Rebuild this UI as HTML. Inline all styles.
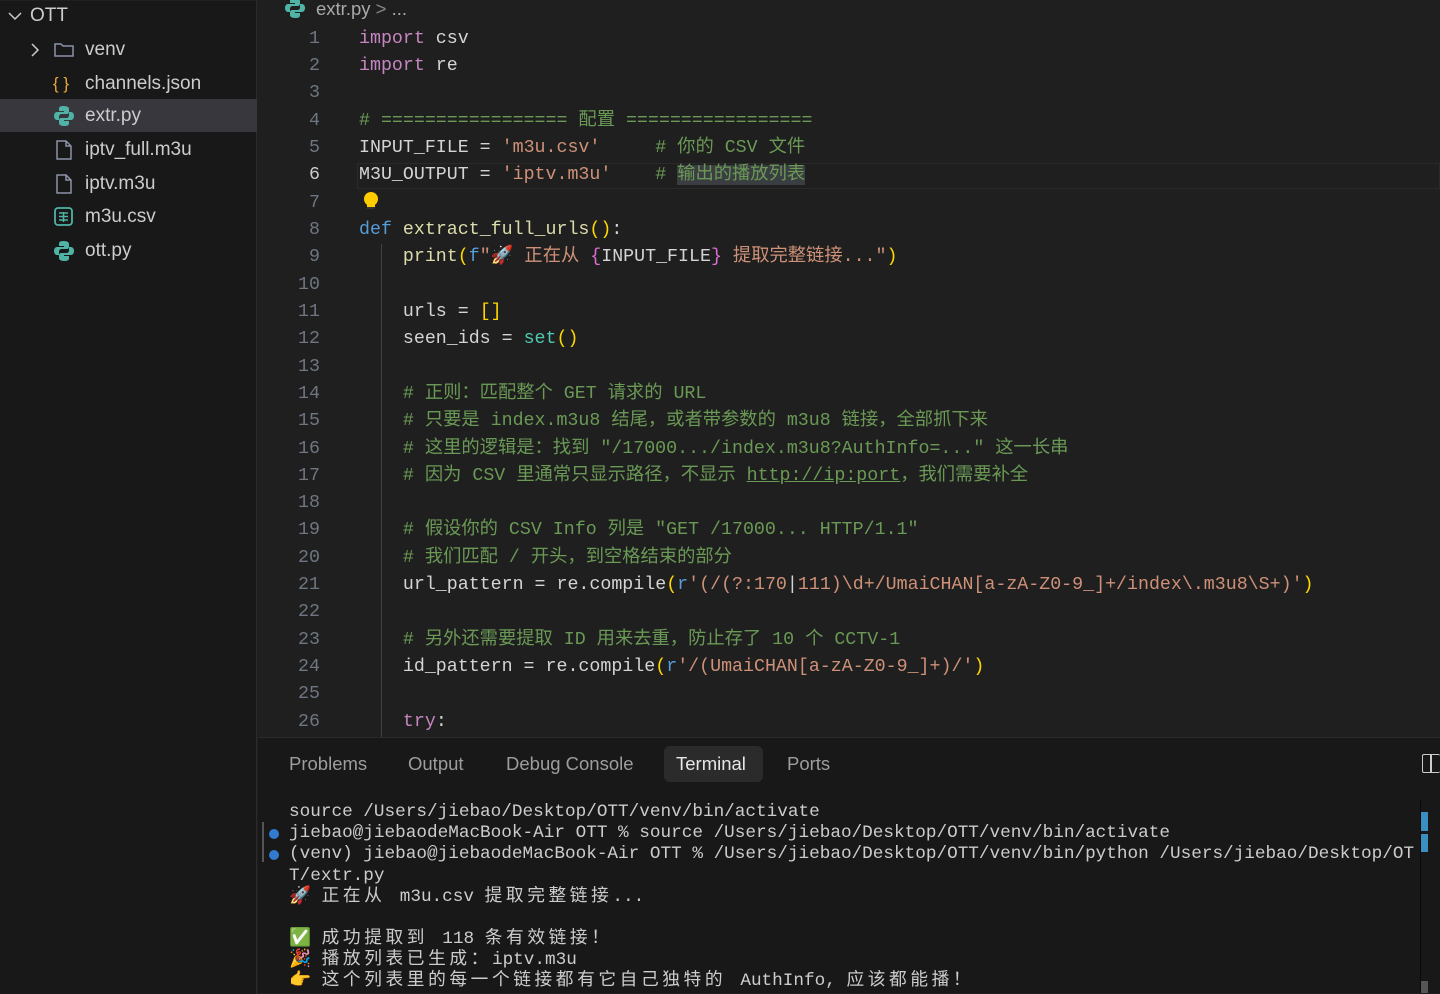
<!DOCTYPE html>
<html><head><meta charset="utf-8">
<style>
*{margin:0;padding:0;box-sizing:border-box}
body{width:1440px;height:993px;background:#1f1f1f;overflow:hidden;position:relative;font-family:"Liberation Sans","Noto Sans CJK SC",sans-serif;color:#cccccc}
#side{position:absolute;left:0;top:1px;width:257px;height:993px;background:#181818;border-right:1px solid #2b2b2b}
.it{position:absolute;left:0;width:257px;height:33px;font-size:19px;line-height:33px;color:#cccccc}
.it .ic{position:absolute;left:53px;top:0;width:22px;height:33px}
.it .t{position:absolute;left:85px}
#ed{position:absolute;left:258px;top:0;width:1182px;height:737px;background:#1f1f1f}
#code{position:absolute;left:0;top:2px;width:1440px;height:735px;overflow:hidden}
.ln{position:absolute;left:258px;width:62px;text-align:right;font-family:"Liberation Mono",monospace;font-size:18.3px;color:#6e7681;height:27px;line-height:27px}
.cl{position:absolute;left:359px;white-space:pre;font-family:"Liberation Mono","Noto Sans CJK SC",monospace;font-size:18.3px;height:27px;line-height:27px;color:#d4d4d4}
.k{color:#c586c0}.d{color:#569cd6}.f{color:#dcdcaa}.s{color:#ce9178}.c{color:#6a9955}.b{color:#4ec9b0}.y{color:#ffd700}.p{color:#da70d6}.v{color:#9cdcfe}
#panel{position:absolute;left:258px;top:737px;width:1182px;height:256px;background:#181818;border-top:1px solid #2b2b2b}
.tab{position:absolute;top:764px;font-size:18.5px;color:#9d9d9d;transform:translateY(-50%)}
.tl{position:absolute;left:289px;white-space:pre;font-family:"Liberation Mono","Noto Sans CJK SC",monospace;font-size:17.7px;color:#cccccc;height:21px;line-height:21px}
.z{letter-spacing:3.6px}
.dot{position:absolute;left:269px;width:10px;height:10px;border-radius:50%;background:#3794ff;opacity:.8}
</style></head><body>
<div id="side">
 <div class="it" style="top:0;height:30px;line-height:30px"><svg style="position:absolute;left:8px;top:9px" width="14" height="12" viewBox="0 0 14 12"><path d="M1 3l6 6 6-6" stroke="#ccc" stroke-width="1.5" fill="none"/></svg><span class="t" style="left:30px">OTT</span></div>
 <div class="it" style="top:32px"><svg style="position:absolute;left:30px;top:10px" width="10" height="14" viewBox="0 0 10 14"><path d="M2 1l6 6-6 6" stroke="#ccc" stroke-width="1.5" fill="none"/></svg><svg class="ic" viewBox="0 0 22 33"><path d="M2 11h6l2 2h10v10H2z" stroke="#8a93a8" stroke-width="1.5" fill="none"/></svg><span class="t">venv</span></div>
 <div class="it" style="top:66px"><span class="ic" style="color:#e8a93a;font-size:17px;line-height:33px">{ }</span><span class="t">channels.json</span></div>
 <div class="it" style="top:98px;background:#37373d"><svg class="ic" viewBox="0 0 22 33"><path d="M10 7c-4 0-4 2-4 3v2h5v1H4c-2 0-3 2-3 4s1 4 3 4h2v-3c0-2 1-3 3-3h5c1 0 2-1 2-2v-3c0-2-2-3-6-3z" fill="#4fb3a5"/><path d="M12 27c4 0 4-2 4-3v-2h-5v-1h7c2 0 3-2 3-4s-1-4-3-4h-2v3c0 2-1 3-3 3H8c-1 0-2 1-2 2v3c0 2 2 3 6 3z" fill="#4fb3a5"/></svg><span class="t">extr.py</span></div>
 <div class="it" style="top:132px"><svg class="ic" viewBox="0 0 22 33"><path d="M4 8h9l5 5v13H4z M13 8v5h5" stroke="#8a93a8" stroke-width="1.5" fill="none"/></svg><span class="t">iptv_full.m3u</span></div>
 <div class="it" style="top:166px"><svg class="ic" viewBox="0 0 22 33"><path d="M4 8h9l5 5v13H4z M13 8v5h5" stroke="#8a93a8" stroke-width="1.5" fill="none"/></svg><span class="t">iptv.m3u</span></div>
 <div class="it" style="top:199px"><svg class="ic" viewBox="0 0 22 33"><rect x="2" y="8" width="17" height="17" rx="3" stroke="#4fb3a5" stroke-width="1.8" fill="none"/><path d="M6 13h9M6 16.5h9M6 20h9M10.5 12v10" stroke="#4fb3a5" stroke-width="1.5"/></svg><span class="t">m3u.csv</span></div>
 <div class="it" style="top:233px"><svg class="ic" viewBox="0 0 22 33"><path d="M10 7c-4 0-4 2-4 3v2h5v1H4c-2 0-3 2-3 4s1 4 3 4h2v-3c0-2 1-3 3-3h5c1 0 2-1 2-2v-3c0-2-2-3-6-3z" fill="#4fb3a5"/><path d="M12 27c4 0 4-2 4-3v-2h-5v-1h7c2 0 3-2 3-4s-1-4-3-4h-2v3c0 2-1 3-3 3H8c-1 0-2 1-2 2v3c0 2 2 3 6 3z" fill="#4fb3a5"/></svg><span class="t">ott.py</span></div>
</div>
<div id="ed"></div>
<svg style="position:absolute;left:284px;top:-1px" width="22" height="22" viewBox="0 2 22 22"><path d="M10 1c-4 0-4 2-4 3v2h5v1H4c-2 0-3 2-3 4s1 4 3 4h2v-3c0-2 1-3 3-3h5c1 0 2-1 2-2V4c0-2-2-3-6-3z" fill="#4fb3a5"/><path d="M12 21c4 0 4-2 4-3v-2h-5v-1h7c2 0 3-2 3-4s-1-4-3-4h-2v3c0 2-1 3-3 3H8c-1 0-2 1-2 2v3c0 2 2 3 6 3z" fill="#4fb3a5"/></svg>
<div style="position:absolute;left:316px;top:-2px;font-size:18.5px;color:#a9a9a9">extr.py <span style="color:#888">&gt;</span> ...</div>
<div id="code">
<div style="position:absolute;left:357px;top:161px;width:1083px;height:26px;border:1px solid #2a2a2a"></div>
<div style="position:absolute;left:381px;top:242px;width:1px;height:495px;background:#404040"></div>
<div class="ln" style="top:24px">1</div><div class="cl" style="top:24px"><span class="k">import</span> csv</div>
<div class="ln" style="top:51px">2</div><div class="cl" style="top:51px"><span class="k">import</span> re</div>
<div class="ln" style="top:78px">3</div>
<div class="ln" style="top:106px">4</div><div class="cl c" style="top:106px"># ================= 配置 =================</div>
<div class="ln" style="top:133px">5</div><div class="cl" style="top:133px">INPUT_FILE = <span class="s">'m3u.csv'</span>     <span class="c"># 你的 CSV 文件</span></div>
<div class="ln" style="top:160px;color:#ccc">6</div><div class="cl" style="top:160px">M3U_OUTPUT = <span class="s">'iptv.m3u'</span>    <span class="c"># <span style="background:#3a3d41">输出的播放列表</span></span></div>
<div class="ln" style="top:188px">7</div><div style="position:absolute;left:364px;top:190px;width:14px;height:14px;border-radius:50%;background:#ffcc00"></div><div style="position:absolute;left:367px;top:202px;width:8px;height:5px;background:#ffcc00;border-bottom:2px solid #333"></div>
<div class="ln" style="top:215px">8</div><div class="cl" style="top:215px"><span class="d">def</span> <span class="f">extract_full_urls</span><span class="y">()</span>:</div>
<div class="ln" style="top:242px">9</div><div class="cl" style="top:242px">    <span class="f">print</span><span class="y">(</span><span class="d">f</span><span class="s">"🚀 正在从 </span><span class="p">{</span>INPUT_FILE<span class="p">}</span><span class="s"> 提取完整链接..."</span><span class="y">)</span></div>
<div class="ln" style="top:270px">10</div>
<div class="ln" style="top:297px">11</div><div class="cl" style="top:297px">    urls = <span class="y">[]</span></div>
<div class="ln" style="top:324px">12</div><div class="cl" style="top:324px">    seen_ids = <span class="b">set</span><span class="y">()</span></div>
<div class="ln" style="top:352px">13</div>
<div class="ln" style="top:379px">14</div><div class="cl c" style="top:379px">    # 正则：匹配整个 GET 请求的 URL</div>
<div class="ln" style="top:406px">15</div><div class="cl c" style="top:406px">    # 只要是 index.m3u8 结尾，或者带参数的 m3u8 链接，全部抓下来</div>
<div class="ln" style="top:434px">16</div><div class="cl c" style="top:434px">    # 这里的逻辑是：找到 "/17000.../index.m3u8?AuthInfo=..." 这一长串</div>
<div class="ln" style="top:461px">17</div><div class="cl c" style="top:461px">    # 因为 CSV 里通常只显示路径，不显示 <u>http://ip:port</u>，我们需要补全</div>
<div class="ln" style="top:488px">18</div>
<div class="ln" style="top:515px">19</div><div class="cl c" style="top:515px">    # 假设你的 CSV Info 列是 "GET /17000... HTTP/1.1"</div>
<div class="ln" style="top:543px">20</div><div class="cl c" style="top:543px">    # 我们匹配 / 开头，到空格结束的部分</div>
<div class="ln" style="top:570px">21</div><div class="cl" style="top:570px">    url_pattern = re.compile<span class="y">(</span><span class="d">r</span><span class="s">'(/(?:170</span>|<span class="s">111)\d+/UmaiCHAN[a-zA-Z0-9_]+/index\.m3u8\S+)'</span><span class="y">)</span></div>
<div class="ln" style="top:597px">22</div>
<div class="ln" style="top:625px">23</div><div class="cl c" style="top:625px">    # 另外还需要提取 ID 用来去重，防止存了 10 个 CCTV-1</div>
<div class="ln" style="top:652px">24</div><div class="cl" style="top:652px">    id_pattern = re.compile<span class="y">(</span><span class="d">r</span><span class="s">'/(UmaiCHAN[a-zA-Z0-9_]+)/'</span><span class="y">)</span></div>
<div class="ln" style="top:679px">25</div>
<div class="ln" style="top:707px">26</div><div class="cl" style="top:707px">    <span class="k">try</span>:</div>
</div>
<div id="panel"></div>
<div class="tab" style="left:289px">Problems</div>
<div class="tab" style="left:408px">Output</div>
<div class="tab" style="left:506px">Debug Console</div>
<div style="position:absolute;left:664px;top:746px;width:99px;height:36px;border-radius:6px;background:#2b2b2b"></div>
<div class="tab" style="left:676px;color:#e7e7e7">Terminal</div>
<div class="tab" style="left:787px">Ports</div>
<div style="position:absolute;left:1422px;top:754px;width:18px;height:19px;border:1.5px solid #ccc;border-right:none;border-radius:2px"></div>
<div style="position:absolute;left:1430px;top:754px;width:1.5px;height:19px;background:#ccc"></div>
<div style="position:absolute;left:1420px;top:800px;width:20px;height:193px;border-left:1px solid #0a0a0a"></div>
<div style="position:absolute;left:1421px;top:812px;width:7px;height:19px;background:#3b8ec0"></div>
<div style="position:absolute;left:1421px;top:834px;width:7px;height:18px;background:#3b8ec0"></div>
<div style="position:absolute;left:1421px;top:981px;width:7px;height:12px;background:#555"></div>
<div style="position:absolute;left:262px;top:822px;width:2px;height:40px;background:#555"></div>
<div class="tl" style="top:802px">source /Users/jiebao/Desktop/OTT/venv/bin/activate</div>
<div class="dot" style="top:829px"></div><div class="tl" style="top:823px">jiebao@jiebaodeMacBook-Air OTT % source /Users/jiebao/Desktop/OTT/venv/bin/activate</div>
<div class="dot" style="top:850px"></div><div class="tl" style="top:844px">(venv) jiebao@jiebaodeMacBook-Air OTT % /Users/jiebao/Desktop/OTT/venv/bin/python /Users/jiebao/Desktop/OT</div>
<div class="tl" style="top:866px">T/extr.py</div>
<div class="tl" style="top:887px">🚀 <span class="z">正在从 </span>m3u.csv <span class="z">提取完整链接</span>...</div>
<div class="tl" style="top:929px">✅ <span class="z">成功提取到 </span>118 <span class="z">条有效链接！</span></div>
<div class="tl" style="top:950px">🎉 <span class="z">播放列表已生成：</span>iptv.m3u</div>
<div class="tl" style="top:971px">👉 <span class="z">这个列表里的每一个链接都有它自己独特的 </span>AuthInfo, <span class="z">应该都能播！</span></div>
</body></html>
